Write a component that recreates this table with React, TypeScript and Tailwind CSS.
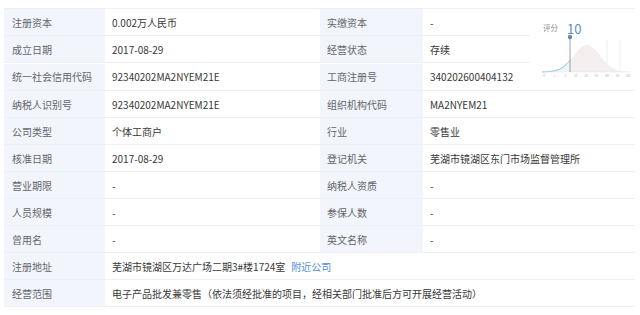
import React from "react";

function Label({ children }: { children: React.ReactNode }) {
  return (
    <div className="h-[27px] flex items-center pl-[8px] bg-[#f2f5fb] border-b border-[#edf1f7] text-[#62666b] text-[10px] whitespace-nowrap">
      {children}
    </div>
  );
}
function Label2({ children }: { children: React.ReactNode }) {
  return (
    <div className="h-[27px] flex items-center pl-[7px] bg-[#f2f5fb] border-b border-[#edf1f7] text-[#62666b] text-[10px] whitespace-nowrap">
      {children}
    </div>
  );
}
function Val({ children, span = "" }: { children: React.ReactNode; span?: string }) {
  return (
    <div className={`h-[27px] flex items-center pl-[7px] bg-white border-b border-[#eceff3] text-[#383838] text-[10px] whitespace-nowrap ${span}`}>
      {children}
    </div>
  );
}

function Chart() {
  const pts: string[] = [];
  const area: string[] = [];
  for (let x = 12; x <= 100; x += 1) {
    const d = (x - 57) / 13;
    const y = 62 - 27 * Math.exp(-0.5 * d * d);
    if (x <= 40) pts.push(`${x},${y.toFixed(2)}`);
    if (x >= 40) area.push(`${x},${y.toFixed(2)}`);
  }
  const ticks = ["0", "1", "3", "10", "20", "40", "60", "80", "100"];
  return (
    <svg width="105" height="80" viewBox="0 0 105 80">
      <line x1="77" y1="30" x2="77" y2="62" stroke="#f1f1f3" strokeWidth="1" />
      <line x1="90" y1="30" x2="90" y2="62" stroke="#f1f1f3" strokeWidth="1" />
      <polygon points={`40,62 ${area.join(" ")} 100,62`} fill="#f4eeee" />
      <polygon points={`12,62 ${pts.join(" ")} 40,62`} fill="#eef6fa" />
      <polyline points={pts.join(" ")} fill="none" stroke="#8cc3d9" strokeWidth="1" />
      <line x1="12" y1="62" x2="100" y2="62" stroke="#e6e8ec" strokeWidth="0.6" />
      <line x1="40" y1="27" x2="40" y2="62" stroke="#7b8ea3" strokeWidth="0.8" />
      <circle cx="40" cy="27" r="2.2" fill="#6d88a4" />
      <text x="13" y="21" fontSize="7.5" fill="#8a8f96">评分</text>
      <text x="37" y="24" fontSize="13" fill="#5a8fc2">10</text>
      {ticks.map((t, i) => (
        <text key={t} x={14 + i * 10.5} y="67" fontSize="3" fill="#b3b6bb" textAnchor="middle">{t}</text>
      ))}
    </svg>
  );
}

export default function App() {
  return (
    <div className="w-[640px] h-[315px] bg-white overflow-hidden pt-[8px] pl-[4px] font-['Noto_Sans_CJK_SC','Noto_Sans',sans-serif]">
      <div className="grid grid-cols-[101px_215px_103px_107px_105px] w-[631px] border-t border-[#eceff3]">
        <Label>注册资本</Label>
        <Val>0.002万人民币</Val>
        <Label2>实缴资本</Label2>
        <Val>-</Val>
        <div className="row-span-3 bg-white border-b border-[#eceff3] flex items-start justify-start pt-[1px]">
          <Chart />
        </div>

        <Label>成立日期</Label>
        <Val>2017-08-29</Val>
        <Label2>经营状态</Label2>
        <Val>存续</Val>

        <Label>统一社会信用代码</Label>
        <Val>92340202MA2NYEM21E</Val>
        <Label2>工商注册号</Label2>
        <Val>340202600404132</Val>

        <Label>纳税人识别号</Label>
        <Val>92340202MA2NYEM21E</Val>
        <Label2>组织机构代码</Label2>
        <Val span="col-span-2">MA2NYEM21</Val>

        <Label>公司类型</Label>
        <Val>个体工商户</Val>
        <Label2>行业</Label2>
        <Val span="col-span-2">零售业</Val>

        <Label>核准日期</Label>
        <Val>2017-08-29</Val>
        <Label2>登记机关</Label2>
        <Val span="col-span-2">芜湖市镜湖区东门市场监督管理所</Val>

        <Label>营业期限</Label>
        <Val>-</Val>
        <Label2>纳税人资质</Label2>
        <Val span="col-span-2">-</Val>

        <Label>人员规模</Label>
        <Val>-</Val>
        <Label2>参保人数</Label2>
        <Val span="col-span-2">-</Val>

        <Label>曾用名</Label>
        <Val>-</Val>
        <Label2>英文名称</Label2>
        <Val span="col-span-2">-</Val>

        <Label>注册地址</Label>
        <Val span="col-span-4">
          芜湖市镜湖区万达广场二期3#楼1724室
          <span className="ml-[6px] text-[#4a8fd6]">附近公司</span>
        </Val>

        <Label>经营范围</Label>
        <Val span="col-span-4">电子产品批发兼零售（依法须经批准的项目，经相关部门批准后方可开展经营活动）</Val>
      </div>
    </div>
  );
}
